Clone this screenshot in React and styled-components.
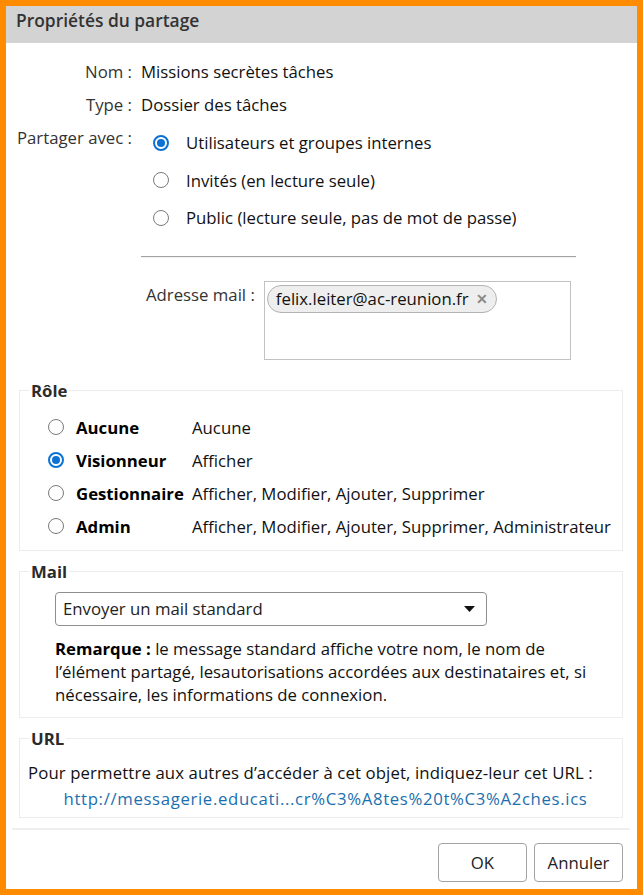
import React from "react";
import styled, { createGlobalStyle } from "styled-components";

const GlobalStyle = createGlobalStyle`
  *, *::before, *::after { box-sizing: border-box; }
  html, body { margin: 0; padding: 0; background: #fff; }
  body { font-family: "Open Sans", "Noto Sans", sans-serif; font-size: 16.75px; color: #1a1a1a; }
`;

const Frame = styled.div`
  width: 643px;
  height: 895px;
  border: 6px solid #ff8c00;
  background: #fff;
  display: flex;
  flex-direction: column;
`;

const Header = styled.div`
  height: 37px;
  flex: none;
  background: #d3d3d3;
  padding: 0 10px;
`;

const Title = styled.h1`
  margin: 0;
  font-size: 17.4px;
  font-weight: 600;
  line-height: 29px;
  color: #333;
`;

const Body = styled.div`
  flex: 1;
  display: flex;
  flex-direction: column;
  padding-top: 12px;
`;

const InfoGrid = styled.div`
  display: grid;
  grid-template-columns: 126px 1fr;
  column-gap: 9px;
  line-height: 33px;
`;

const Label = styled.div`
  text-align: right;
  color: #333;
  white-space: nowrap;
`;

const Value = styled.div`
  color: #111;
`;

const RadioList = styled.div`
  display: flex;
  flex-direction: column;
  padding-top: 3px;
`;

const RadioItem = styled.label`
  display: flex;
  align-items: center;
  height: 37.5px;
  padding-left: 12px;
  gap: 17px;
  color: #111;
`;

const RadioMark = styled.span`
  width: 16px;
  height: 16px;
  flex: none;
  border-radius: 50%;
  border: ${p => (p.$on ? "2px solid #0b72d4" : "1.3px solid #7a7a7a")};
  display: inline-flex;
  align-items: center;
  justify-content: center;
  background: #fff;
  &::after {
    content: "";
    display: ${p => (p.$on ? "block" : "none")};
    width: 8px;
    height: 8px;
    border-radius: 50%;
    background: #0b72d4;
  }
`;

const Divider = styled.hr`
  margin: 19px 0 0 135px;
  width: 435px;
  border: none;
  border-top: 1px solid #a3a3a3;
  border-bottom: 1px solid #f0f0f0;
  height: 0;
`;

const MailRow = styled.div`
  display: flex;
  align-items: flex-start;
  gap: 9px;
  margin-top: 23px;
  padding-left: 140px;
`;

const MailLabel = styled.div`
  line-height: 28px;
  color: #333;
  white-space: nowrap;
`;

const MailBox = styled.div`
  width: 307px;
  height: 79px;
  border: 1px solid #c2c2c2;
  padding: 3px 2px;
  display: flex;
  align-items: flex-start;
`;

const Chip = styled.span`
  display: inline-flex;
  align-items: center;
  height: 28px;
  padding: 0 8px 0 8px;
  gap: 7px;
  border: 1px solid #b3b3b3;
  border-radius: 14px;
  background: #eeeeee;
  color: #111;
  white-space: nowrap;
`;

const ChipClose = styled.span`
  color: #8a8a8a;
  font-size: 14px;
  line-height: 1;
  font-weight: 600;
`;

const Fieldset = styled.fieldset`
  margin: ${p => p.$mt}px 14px 0 13px;
  padding: ${p => p.$pt}px 9px ${p => p.$pb}px 8px;
  border: 1px solid #ececec;
  min-width: 0;
`;

const Legend = styled.legend`
  padding: 0 2px;
  margin-left: 1px;
  font-weight: 700;
  line-height: 22px;
  color: #2b2b2b;
`;

const RoleGrid = styled.div`
  display: grid;
  grid-template-columns: 28px 116px 1fr;
  grid-auto-rows: 33px;
  align-items: center;
  padding-left: 20px;
`;

const RoleName = styled.span`
  font-weight: 700;
  color: #000;
  white-space: nowrap;
`;

const RoleDesc = styled.span`
  color: #111;
  white-space: nowrap;
`;

const Select = styled.div`
  margin-left: 27px;
  width: 432px;
  height: 34px;
  border: 1px solid #8e8e8e;
  border-radius: 4px;
  display: flex;
  align-items: center;
  justify-content: space-between;
  padding: 0 11px 0 7px;
  color: #222;
`;

const Note = styled.p`
  margin: 11px 0 0 27px;
  line-height: 23px;
  color: #111;
  max-width: 552px;
`;

const NoteLead = styled.strong`
  font-weight: 700;
  color: #000;
`;

const UrlText = styled.div`
  line-height: 26px;
  color: #111;
  white-space: nowrap;
  letter-spacing: 0.12px;
`;

const UrlLink = styled.a`
  display: block;
  text-align: center;
  padding-left: 10px;
  line-height: 26px;
  color: #1b6fae;
  text-decoration: none;
  white-space: nowrap;
  letter-spacing: 0.65px;
`;

const Footer = styled.div`
  margin-top: auto;
  display: flex;
  flex-direction: column;
`;

const FooterLine = styled.div`
  height: 2px;
  background: #efefef;
  margin: 0 7px 0 6px;
`;

const Buttons = styled.div`
  display: flex;
  justify-content: flex-end;
  gap: 7px;
  padding: 13px 14px 7px 0;
`;

const Button = styled.button`
  width: 89px;
  height: 39px;
  border: 1px solid #a3a3a3;
  border-radius: 4px;
  background: #fff;
  font-family: inherit;
  font-size: 16.75px;
  color: #222;
  padding: 0;
`;

const Caret = () => (
  <svg width="11" height="6" viewBox="0 0 11 6">
    <path d="M0 0 H11 L5.5 6 Z" fill="#111" />
  </svg>
);

const shareOptions = [
  { label: "Utilisateurs et groupes internes", on: true },
  { label: "Invités (en lecture seule)" },
  { label: "Public (lecture seule, pas de mot de passe)" },
];

const roles = [
  { name: "Aucune", desc: "Aucune" },
  { name: "Visionneur", desc: "Afficher", on: true },
  { name: "Gestionnaire", desc: "Afficher, Modifier, Ajouter, Supprimer" },
  { name: "Admin", desc: "Afficher, Modifier, Ajouter, Supprimer, Administrateur" },
];

export default function App() {
  return (
    <>
      <GlobalStyle />
      <Frame>
        <Header>
          <Title>Propriétés du partage</Title>
        </Header>
        <Body>
          <InfoGrid>
            <Label>Nom :</Label>
            <Value>Missions secrètes tâches</Value>
            <Label>Type :</Label>
            <Value>Dossier des tâches</Value>
            <Label>Partager avec :</Label>
            <RadioList>
              {shareOptions.map(o => (
                <RadioItem key={o.label}>
                  <RadioMark $on={o.on} />
                  {o.label}
                </RadioItem>
              ))}
            </RadioList>
          </InfoGrid>
          <Divider />
          <MailRow>
            <MailLabel>Adresse mail :</MailLabel>
            <MailBox>
              <Chip>
                felix.leiter@ac-reunion.fr
                <ChipClose>✕</ChipClose>
              </Chip>
            </MailBox>
          </MailRow>

          <Fieldset $mt={20} $pt={9} $pb={7}>
            <Legend>Rôle</Legend>
            <RoleGrid>
              {roles.map(r => (
                <React.Fragment key={r.name}>
                  <RadioMark $on={r.on} />
                  <RoleName>{r.name}</RoleName>
                  <RoleDesc>{r.desc}</RoleDesc>
                </React.Fragment>
              ))}
            </RoleGrid>
          </Fieldset>

          <Fieldset $mt={10} $pt={9} $pb={11}>
            <Legend>Mail</Legend>
            <Select>
              <span>Envoyer un mail standard</span>
              <Caret />
            </Select>
            <Note>
              <NoteLead>Remarque :</NoteLead>{" "}
              le message standard affiche votre nom, le nom de l’élément partagé, lesautorisations accordées aux destinataires et, si nécessaire, les informations de connexion.
            </Note>
          </Fieldset>

          <Fieldset $mt={10} $pt={10} $pb={5}>
            <Legend>URL</Legend>
            <UrlText>Pour permettre aux autres d’accéder à cet objet, indiquez-leur cet URL :</UrlText>
            <UrlLink href="#">http://messagerie.educati...cr%C3%A8tes%20t%C3%A2ches.ics</UrlLink>
          </Fieldset>

          <Footer>
            <FooterLine />
            <Buttons>
              <Button>OK</Button>
              <Button>Annuler</Button>
            </Buttons>
          </Footer>
        </Body>
      </Frame>
    </>
  );
}
